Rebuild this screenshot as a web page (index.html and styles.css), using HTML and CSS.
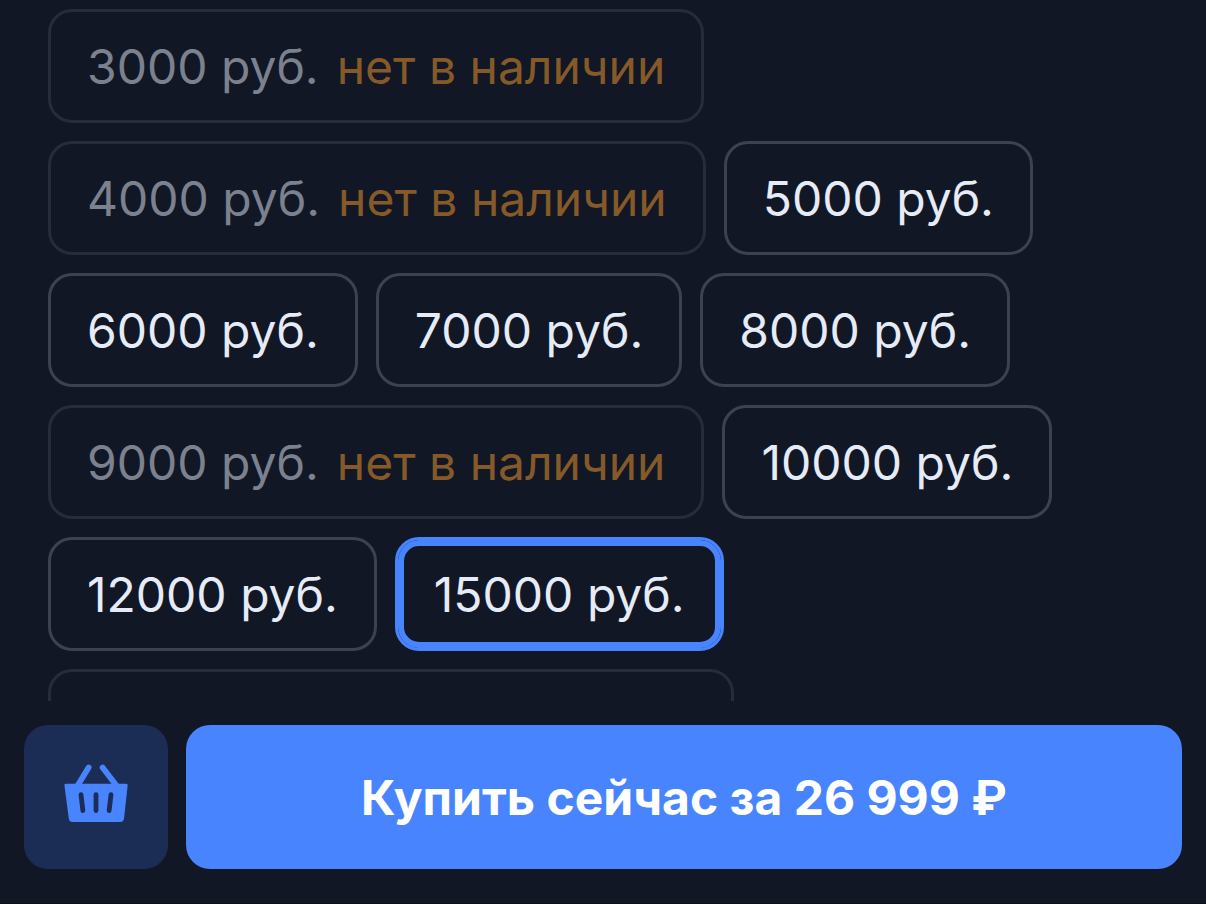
FILE: index.html
```html
<!DOCTYPE html>
<html lang="ru">
<head>
  <meta charset="UTF-8" />
  <meta name="viewport" content="width=device-width, initial-scale=1.0"/>
  <title>Выбор номинала</title>
  <link rel="stylesheet" href="styles.css">
</head>
<body>

  <main class="options">
    <button class="option" disabled>3000 руб. <span class="stock">нет в наличии</span></button>
    <button class="option" disabled>4000 руб. <span class="stock">нет в наличии</span></button>
    <button class="option">5000 руб.</button>
    <button class="option">6000 руб.</button>
    <button class="option">7000 руб.</button>
    <button class="option">8000 руб.</button>
    <button class="option" disabled>9000 руб. <span class="stock">нет в наличии</span></button>
    <button class="option">10000 руб.</button>
    <button class="option">12000 руб.</button>
    <button class="option selected" aria-pressed="true">15000 руб.</button>
    <button class="option" disabled>20000 руб. <span class="stock">нет в наличии</span></button>
  </main>

  <footer class="buy-bar">
    <button class="cart-btn" aria-label="В корзину">
      <svg viewBox="0 0 72 72" width="72" height="72" aria-hidden="true">
        <path d="M28.6 6.6 18 24M42.6 6.6 56 24" fill="none" stroke="currentColor" stroke-width="5.8" stroke-linecap="round"/>
        <path fill="currentColor" d="M5.8 22.7H66.2Q67.8 22.7 67.7 24.3L64 57.6Q63.6 61 60.4 61H12.4Q9.2 61 8.8 57.6L4.4 24.3Q4.2 22.7 5.8 22.7Z"/>
        <path class="slots" d="M21 33.6 22.9 49.6M36 33.6V49.6M51 33.6 49.1 49.6" fill="none" stroke-width="4.8" stroke-linecap="round"/>
      </svg>
    </button>
    <button class="buy-btn">Купить сейчас за 26 999 ₽</button>
  </footer>

</body>
</html>
```

FILE: styles.css
```css
* {
  box-sizing: border-box;
}

body {
  font-family: Inter, "Liberation Sans", sans-serif;
  background: #111725;
  color: #e5ebf7;
  display: flex;
  flex-direction: column;
  margin: 0;
  height: 100vh;
}

button {
  font-family: inherit;
  border: none;
  cursor: pointer;
}

.options {
  flex: 1;
  min-height: 0;
  overflow: hidden;
  display: flex;
  flex-wrap: wrap;
  align-content: flex-start;
  gap: 18px;
  padding: 9px 48px 0;
}

.option {
  display: flex;
  gap: 18px;
  font-size: 48px;
  line-height: 72px;
  padding: 19px 36px 17px;
  border: 3px solid #3c4251;
  border-radius: 24px;
  background: transparent;
  color: inherit;
  white-space: nowrap;
}

.option:disabled {
  border-color: #262c3a;
  color: #7b818e;
  cursor: default;
}

.option.selected {
  border-color: #4984ff;
  box-shadow: inset 0 0 0 6px #4984ff;
}

.stock {
  color: #855a28;
}

.buy-bar {
  display: flex;
  gap: 18px;
  padding: 24px 24px 34px;
  border-bottom: 1px solid #0b101b;
}

.cart-btn {
  display: flex;
  align-items: center;
  justify-content: center;
  width: 144px;
  height: 144px;
  padding: 0;
  border-radius: 24px;
  background: #1c2d55;
  color: #4984ff;
}

.slots {
  stroke: #1c2d55;
}

.buy-btn {
  flex: 1;
  border-radius: 24px;
  background: #4984ff;
  color: #fff;
  font-size: 48px;
  font-weight: 700;
}
```
